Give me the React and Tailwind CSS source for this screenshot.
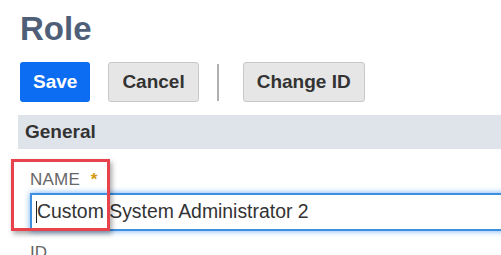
import React from "react";

export default function App() {
    return (
        <div className="w-[501px] h-[255px] overflow-hidden bg-white relative font-['Liberation_Sans',Arial,sans-serif]">
            {/* Title */}
            <h1 className="pl-5 pt-[11px] text-[33px] leading-[36px] font-bold text-[#4f5f78]">
                Role
            </h1>

            {/* Actions */}
            <div className="flex items-center pl-5 mt-[15px] h-10">
                <button className="h-10 px-[13px] rounded-[3px] bg-[#0c6cf2] text-white text-[19px] font-bold">
                    Save
                </button>
                <button className="h-10 ml-[18px] px-[13px] rounded-[3px] bg-[#e6e6e6] border border-[#c8c8c8] text-[#333] text-[19px] font-bold">
                    Cancel
                </button>
                <div className="ml-[18px] w-[2px] h-[37px] bg-[#b0b0b0]" />
                <button className="h-10 ml-[24px] px-[13px] rounded-[3px] bg-[#e6e6e6] border border-[#c8c8c8] text-[#333] text-[19px] font-bold">
                    Change ID
                </button>
            </div>

            {/* Section header */}
            <div className="ml-[18px] mt-[13px] h-[34px] flex items-center pl-[7px] bg-[#dfe3ea] text-[19px] font-bold text-[#333]">
                General
            </div>

            {/* Name field */}
            <div className="pl-[30px] mt-[21px]">
                <div className="text-[17px] leading-[20px] text-[#666] tracking-[0.2px]">
                    NAME <span className="ml-[6px] text-[#d29a12] font-bold">*</span>
                </div>
                <div className="mt-[3px] h-[38px] w-[500px] border-2 border-[#3f8fe0] shadow-[0_0_6px_#6aaaf0] flex items-center pl-[4px] bg-white">
                    <span className="w-px h-[22px] bg-[#222]" />
                    <span className="text-[19.4px] text-[#333]">Custom System Administrator 2</span>
                </div>
                <div className="mt-[12px] text-[17px] leading-[20px] text-[#666]">ID</div>
            </div>

            {/* Annotation highlight */}
            <div className="absolute left-[11px] top-[159px] w-[99px] h-[72px] border-[3px] border-[#e8434c] shadow-[2px_3px_5px_rgba(0,0,0,0.35)]" />
        </div>
    );
}
